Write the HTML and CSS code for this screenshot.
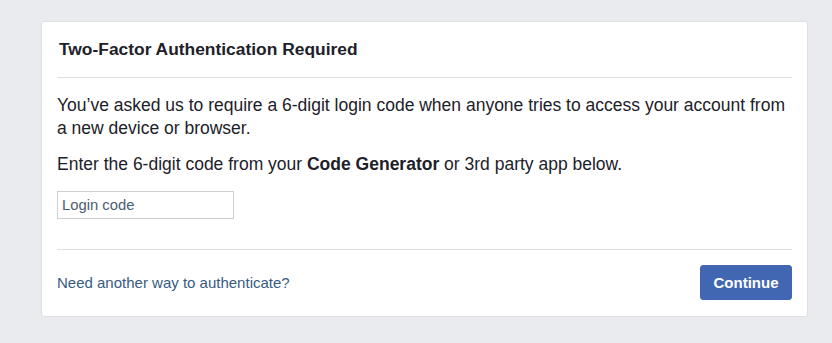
FILE: index.html
```html
<!DOCTYPE html>
<html>
<head>
<meta charset="utf-8">
<link rel="stylesheet" href="styles.css">
</head>
<body>
<div class="card">
  <div class="header">Two-Factor Authentication Required</div>
  <div class="body">
    <p class="p1">You’ve asked us to require a 6-digit login code when anyone tries to access your account from a new device or browser.</p>
    <p class="p2">Enter the 6-digit code from your <strong>Code Generator</strong> or 3rd party app below.</p>
    <input class="code" type="text" placeholder="Login code">
  </div>
  <div class="footer">
    <a class="link" href="#">Need another way to authenticate?</a>
    <button class="btn">Continue</button>
  </div>
</div>
</body>
</html>
```
FILE: styles.css
```css
html, body {
  margin: 0;
  padding: 0;
  background: #e9ebee;
  font-family: "Liberation Sans", Arial, sans-serif;
  color: #1d2129;
}
body {
  padding: 21px 24px 0 41px;
}
.card {
  width: 767px;
  box-sizing: border-box;
  background: #fff;
  border: 1px solid #dddfe2;
  border-radius: 3px;
  padding: 0 15px 0 15px;
}
.header {
  font-size: 17.4px;
  font-weight: bold;
  line-height: 21px;
  padding: 17px 0 17px 2px;
  border-bottom: 1px solid #dddfe2;
}
.body {
  padding: 16px 0 30px;
  border-bottom: 1px solid #dddfe2;
  font-size: 17.5px;
  line-height: 23px;
}
.body p {
  margin: 0;
}
.body .p1 {
  margin-bottom: 13px;
}
.body .p2 {
  margin-bottom: 15px;
}
.code {
  display: block;
  width: 177px;
  height: 28px;
  box-sizing: border-box;
  border: 1px solid #ccd0d5;
  padding: 0 4px;
  font-family: "Liberation Sans", Arial, sans-serif;
  font-size: 14.8px;
  color: #1d2129;
  outline: none;
  border-radius: 0;
}
.code::placeholder {
  color: #4b5e70;
}
.footer {
  display: flex;
  justify-content: space-between;
  align-items: center;
  padding: 15px 0 16px;
}
.link {
  color: #385b82;
  font-size: 15px;
  text-decoration: none;
}
.btn {
  background: #4267b2;
  border: 1px solid #4267b2;
  border-radius: 3px;
  color: #fff;
  font-family: "Liberation Sans", Arial, sans-serif;
  font-size: 15px;
  font-weight: bold;
  height: 35px;
  width: 92px;
  padding: 0;
}
```
